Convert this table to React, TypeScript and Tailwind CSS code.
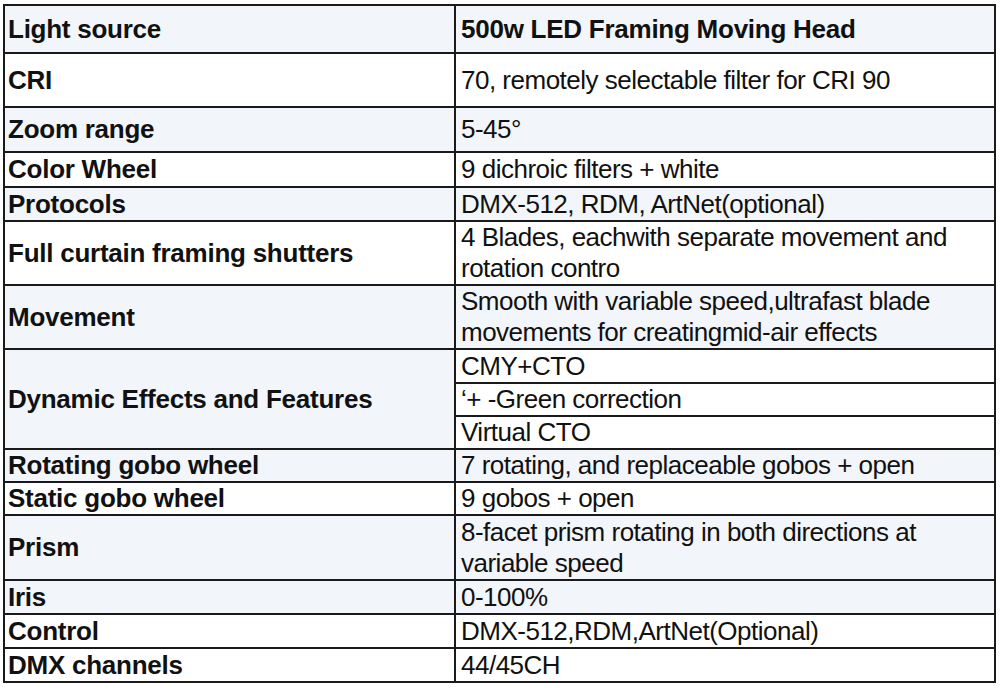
import React from 'react'

type Row = {
  label: string
  value: string[]
  gray?: boolean
}

// specs of the moving head, one entry per table row
const rows: Row[] = [
  { label: 'Light source', value: ['500w LED Framing Moving Head'], gray: true },
  { label: 'CRI', value: ['70, remotely selectable filter for CRI 90'] },
  { label: 'Zoom range', value: ['5-45°'], gray: true },
  { label: 'Color Wheel', value: ['9 dichroic filters + white'] },
  { label: 'Protocols', value: ['DMX-512, RDM, ArtNet(optional)'], gray: true },
  { label: 'Full curtain framing shutters', value: ['4 Blades, eachwith separate movement and', 'rotation contro'] },
  { label: 'Movement', value: ['Smooth with variable speed,ultrafast blade', 'movements for creatingmid-air effects'], gray: true },
]

const rowsBottom: Row[] = [
  { label: 'Rotating gobo wheel', value: ['7 rotating, and replaceable gobos + open'], gray: true },
  { label: 'Static gobo wheel', value: ['9 gobos + open'] },
  { label: 'Prism', value: ['8-facet prism rotating in both directions at', 'variable speed'], gray: true },
  { label: 'Iris', value: ['0-100%'], gray: true },
  { label: 'Control', value: ['DMX-512,RDM,ArtNet(Optional)'] },
  { label: 'DMX channels', value: ['44/45CH'] },
]

function Label({ row }: { row: Row }) {
  return (
    <div className={`flex items-center pl-[3px] font-bold tracking-[-0.25px] ${row.gray ? 'bg-[#f2f5f9]' : 'bg-white'}`}>
      {row.label}
    </div>
  )
}

function Value({ row, bold }: { row: Row; bold?: boolean }) {
  return (
    <div
      className={`flex flex-col justify-center pl-[5px] leading-[31px] ${bold ? 'font-bold tracking-[-0.25px]' : 'tracking-[-0.5px]'} ${row.gray ? 'bg-[#f2f5f9]' : 'bg-white'}`}
    >
      {row.value.map((line) => (
        <span key={line}>{line}</span>
      ))}
    </div>
  )
}

export default function App() {
  return (
    <div className="w-[1000px] h-[691px] bg-white pt-[4px] pl-[3px]">
      <div
        className="grid w-[993px] grid-cols-[449px_538px] grid-rows-[46px_52px_43px_33px_32px_62px_62px_32px_31px_31px_31px_31px_63px_32px_32px_32px] gap-[2px] bg-[#1a1a1a] p-[2px] text-[26px] text-[#111] antialiased"
        style={{ fontFamily: '"Liberation Sans", Arial, sans-serif' }}
      >
        {rows.map((row, i) => (
          <React.Fragment key={row.label}>
            <Label row={row} />
            <Value row={row} bold={i === 0} />
          </React.Fragment>
        ))}

        {/* spans the three effect rows */}
        <div className="row-span-3 flex items-center pl-[3px] font-bold tracking-[-0.25px] bg-[#f2f5f9]">
          Dynamic Effects and Features
        </div>
        <div className="flex items-center pl-[5px] tracking-[-0.5px] bg-white">CMY+CTO</div>
        <div className="flex items-center pl-[5px] tracking-[-0.5px] bg-white">‘+ -Green correction</div>
        <div className="flex items-center pl-[5px] tracking-[-0.5px] bg-white">Virtual CTO</div>

        {rowsBottom.map((row) => (
          <React.Fragment key={row.label}>
            <Label row={row} />
            <Value row={row} />
          </React.Fragment>
        ))}
      </div>
    </div>
  )
}
